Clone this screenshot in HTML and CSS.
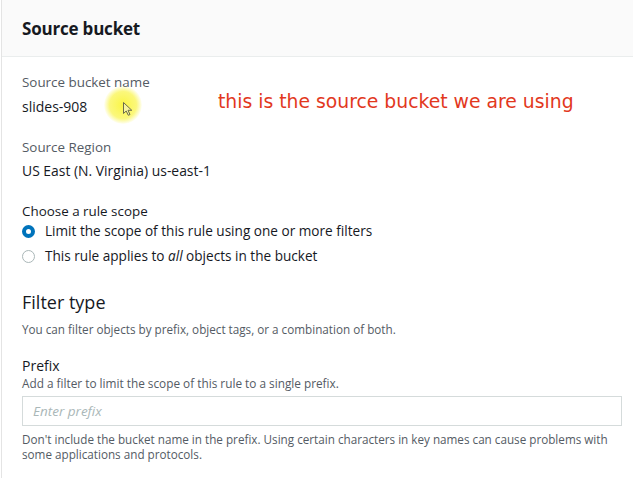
FILE: index.html
```html
<!DOCTYPE html>
<html>
<head>
<meta charset="utf-8">
<link rel="stylesheet" href="styles.css">
</head>
<body>
<div class="panel">
  <div class="header"><h2>Source bucket</h2></div>
  <div class="content">
    <div class="field">
      <div class="label">Source bucket name</div>
      <div class="value-row">
        <span class="value name">slides-908</span>
        <span class="note">this is the source bucket we are using</span>
        <span class="spot"></span>
        <svg class="cursor" width="12" height="16" viewBox="0 0 12 16"><path d="M1.5 1.5 L1.5 12.5 L4.2 10 L6.3 14.3 L8 13.5 L6 9.3 L9.8 9.3 Z" fill="#f6f3a0" stroke="#6b6b4a" stroke-width="1"/></svg>
      </div>
    </div>
    <div class="field">
      <div class="label">Source Region</div>
      <div class="value region">US East (N. Virginia) us-east-1</div>
    </div>
    <div class="field scope">
      <div class="label dark">Choose a rule scope</div>
      <label class="radio"><span class="dot on"></span>Limit the scope of this rule using one or more filters</label>
      <label class="radio"><span class="dot"></span>This rule applies to&nbsp;<i>all</i>&nbsp;objects in the bucket</label>
    </div>
    <h3>Filter type</h3>
    <p class="desc">You can filter objects by prefix, object tags, or a combination of both.</p>
    <div class="prefix">
      <div class="plabel">Prefix</div>
      <div class="desc sub">Add a filter to limit the scope of this rule to a single prefix.</div>
      <div class="input">Enter prefix</div>
      <div class="desc hint">Don't include the bucket name in the prefix. Using certain characters in key names can cause problems with some applications and protocols.</div>
    </div>
  </div>
</div>
</body>
</html>
```
FILE: styles.css
```css
html, body { margin: 0; padding: 0; background: #fff; }
body { font-family: "Open Sans", "Noto Sans", sans-serif; color: #16191f; width: 633px; height: 478px; overflow: hidden; }
.panel { border-left: 1px solid #e4e4e4; margin-left: 1px; height: 478px; }
.header { background: #fafafa; border-bottom: 1px solid #eaeded; height: 56px; display: flex; align-items: center; padding-left: 20px; }
.header h2 { margin: 0; font-size: 17px; font-weight: 700; letter-spacing: -0.2px; color: #16191f; }
.content { padding: 15px 0 0 20px; }
.field { margin-bottom: 17px; }
.label { font-size: 13.4px; color: #545b64; line-height: 20px; }
.label.dark { color: #16191f; line-height: 18px; }
.value { font-size: 14px; color: #16191f; line-height: 20px; }
.region { margin-top: 4px; font-size: 13.9px; }
.value-row { position: relative; display: flex; align-items: center; height: 26px; margin-top: 2px; }
.value.name { width: 196px; flex: none; }
.spot { position: absolute; left: 82px; top: -8px; width: 38px; height: 38px; border-radius: 50%; background: radial-gradient(circle, rgba(250,245,60,0.95) 0%, rgba(250,245,80,0.75) 50%, rgba(255,255,150,0) 72%); }
.cursor { position: absolute; left: 100px; top: 7px; }
.note { align-self: flex-start; margin-top: -3px; line-height: 22px; font-family: "DejaVu Sans", sans-serif; font-size: 18.8px; color: #e2381d; white-space: nowrap; }
.scope { margin-top: 21px; margin-bottom: 24px; }
.radio { display: flex; align-items: center; font-size: 13.6px; line-height: 20px; color: #16191f; margin-top: 5px; }
.radio:first-of-type { margin-top: 1px; }
.dot { flex: none; box-sizing: border-box; width: 13px; height: 13px; border-radius: 50%; border: 1px solid #aab7b8; margin: 0 10px 0 0; }
.dot.on { border: 4px solid #0073bb; }
h3 { margin: 0; font-size: 18px; font-weight: 400; color: #16191f; line-height: 24px; }
.desc { font-size: 11.4px; color: #545b64; line-height: 16px; margin: 0; }
p.desc { margin: 7px 0 20px; font-size: 11.7px; }
.sub { font-size: 11.8px; }
.plabel { font-size: 14px; color: #16191f; line-height: 18px; }
.input { width: 600px; height: 30px; box-sizing: border-box; border: 1px solid #d5dbdb; margin-top: 5px; padding-left: 10px; font-size: 13.5px; font-style: italic; color: #aab7b8; display: flex; align-items: center; }
.hint { margin-top: 6px; line-height: 15px; width: 590px; font-size: 11.7px; }
```
